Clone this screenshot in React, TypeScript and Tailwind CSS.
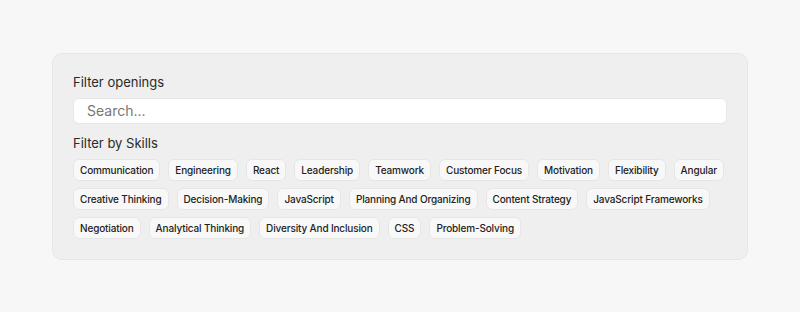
const skills = [
  'Communication',
  'Engineering',
  'React',
  'Leadership',
  'Teamwork',
  'Customer Focus',
  'Motivation',
  'Flexibility',
  'Angular',
  'Creative Thinking',
  'Decision-Making',
  'JavaScript',
  'Planning And Organizing',
  'Content Strategy',
  'JavaScript Frameworks',
  'Negotiation',
  'Analytical Thinking',
  'Diversity And Inclusion',
  'CSS',
  'Problem-Solving',
]

export default function App() {
  return (
    <div className="flex h-[312px] w-full items-center justify-center bg-[#f7f7f7] font-['Inter',sans-serif]">
      <div className="w-[696px] rounded-[10px] border border-[#e6e6e6] bg-[#efefef] p-5">
        <p className="text-[13px] leading-4 text-[#2a2a2a]">Filter openings</p>
        <input
          className="mt-2 h-[26px] w-full rounded-md border border-[#e8e8e8] bg-white px-[13px] text-[14px] text-[#333] outline-none placeholder:text-[#777]"
          placeholder="Search..."
        />
        <p className="mt-[11px] text-[13px] leading-4 text-[#2a2a2a]">Filter by Skills</p>
        <div className="mt-2 flex flex-wrap gap-x-2 gap-y-[7px]">
          {skills.map((s) => (
            <button
              key={s}
              className="rounded-md border border-[#e6e6e6] bg-[#f8f8f8] px-[6px] py-1 text-[10px] leading-3 font-medium tracking-[-0.15px] text-[#222]"
            >
              {s}
            </button>
          ))}
        </div>
      </div>
    </div>
  )
}
